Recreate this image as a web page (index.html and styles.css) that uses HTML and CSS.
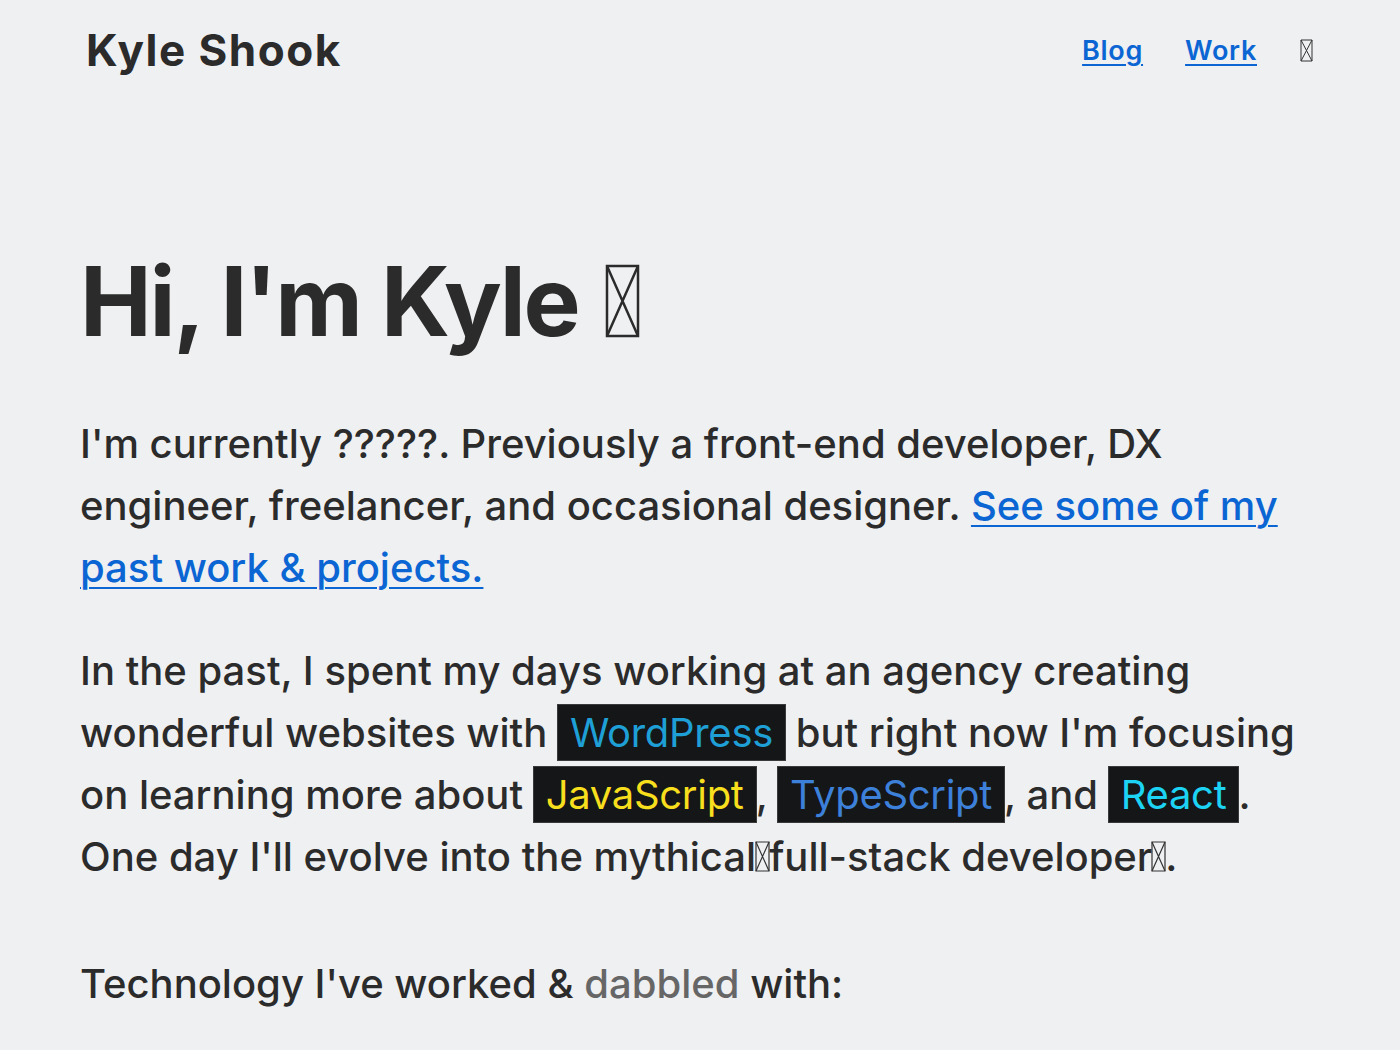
FILE: index.html
```html
<!DOCTYPE html>
<html lang="en">
<head>
<meta charset="utf-8">
<title>Kyle Shook</title>
<link rel="stylesheet" href="styles.css">
</head>
<body>
<div class="wrap">
  <header class="site-header">
    <a class="logo" href="#">Kyle Shook</a>
    <nav class="nav">
      <a href="#">Blog</a>
      <a href="#">Work</a>
      <span class="tofu tofu-nav"><svg viewBox="0 0 10 20" preserveAspectRatio="none"><rect x="0" y="0" width="10" height="20" fill="none" stroke="currentColor" vector-effect="non-scaling-stroke"/><path d="M0 0L10 20M10 0L0 20" stroke="currentColor" fill="none" vector-effect="non-scaling-stroke"/></svg></span>
    </nav>
  </header>

  <main>
    <h1 class="hero">Hi, I'm Kyle <span class="tofu tofu-hero"><svg viewBox="0 0 10 20" preserveAspectRatio="none"><rect x="0" y="0" width="10" height="20" fill="none" stroke="currentColor" vector-effect="non-scaling-stroke"/><path d="M0 0L10 20M10 0L0 20" stroke="currentColor" fill="none" vector-effect="non-scaling-stroke"/></svg></span></h1>

    <p class="lead">I'm currently ?????. Previously a front-end developer, DX engineer, freelancer, and occasional designer. <a href="#">See some of my past work &amp; projects.</a></p>

    <p class="lead">In the past, I spent my days working at an agency creating wonderful websites with <span class="tag tag-wp">WordPress</span> but right now I'm focusing on learning more about <span class="tag tag-js">JavaScript</span>, <span class="tag tag-ts">TypeScript</span>, and <span class="tag tag-react">React</span>. One day I'll evolve into the mythical<span class="tofu tofu-text"><svg viewBox="0 0 10 20" preserveAspectRatio="none"><rect x="0" y="0" width="10" height="20" fill="none" stroke="currentColor" vector-effect="non-scaling-stroke"/><path d="M0 0L10 20M10 0L0 20" stroke="currentColor" fill="none" vector-effect="non-scaling-stroke"/></svg></span>full-stack developer<span class="tofu tofu-text"><svg viewBox="0 0 10 20" preserveAspectRatio="none"><rect x="0" y="0" width="10" height="20" fill="none" stroke="currentColor" vector-effect="non-scaling-stroke"/><path d="M0 0L10 20M10 0L0 20" stroke="currentColor" fill="none" vector-effect="non-scaling-stroke"/></svg></span>.</p>

    <h2 class="section-title">Technology I've worked &amp; <span class="muted">dabbled</span> with:</h2>
  </main>
</div>
</body>
</html>
```

FILE: styles.css
```css
html, body {
  margin: 0;
  padding: 0;
}

body {
  background: #eff0f2;
  color: #2b2b2b;
  font-family: "Inter", "Lato", "Liberation Sans", sans-serif;
}

.wrap {
  max-width: 1240px;
  margin: 0 auto;
}

.site-header {
  display: flex;
  justify-content: space-between;
  align-items: center;
  padding-top: 18px;
}

.logo {
  font-size: 44px;
  line-height: 64px;
  font-weight: 700;
  letter-spacing: 1.5px;
  color: #2b2b2b;
  text-decoration: none;
  padding-left: 6px;
}

.nav {
  display: flex;
  align-items: center;
  gap: 42px;
  padding-right: 8px;
  margin-top: 0;
}

.nav a {
  font-size: 27px;
  font-weight: 600;
  letter-spacing: 0.7px;
  color: #0b66d4;
  text-decoration: underline;
  text-decoration-thickness: 2px;
  text-underline-offset: 4px;
}

.tofu {
  display: inline-block;
  color: #333;
}

.tofu svg {
  display: block;
  width: 100%;
  height: 100%;
  overflow: visible;
}

.tofu-nav {
  width: 11px;
  height: 21px;
  margin-left: 2px;
}

.tofu-nav svg {
  stroke-width: 1px;
}

.tofu-hero {
  width: 31px;
  height: 70px;
  vertical-align: baseline;
  color: #2b2b2b;
  margin-left: 8px;
}

.tofu-hero svg {
  stroke-width: 2.5px;
}

.tofu-text {
  width: 13px;
  height: 29px;
  vertical-align: baseline;
}

.tofu-text svg {
  stroke-width: 1.2px;
}

.hero {
  font-size: 96px;
  line-height: 1.2;
  font-weight: 700;
  margin: 162px 0 54px;
  letter-spacing: -2.3px;
}

.lead {
  font-size: 40px;
  line-height: 62px;
  font-weight: 500;
  margin: 0 0 41px;
}

.lead a {
  color: #0b66d4;
  text-decoration: underline;
  text-decoration-thickness: 2px;
  text-underline-offset: 5px;
}

.tag {
  background: #151617;
  padding: 3px 12px;
  font-weight: 400;
  letter-spacing: -0.3px;
  box-shadow: 0 0 0 1px #3a3a3a;
}

.tag-wp { color: #1e9fd6; }
.tag-js { color: #f7df1e; }
.tag-ts { color: #3d80d9; }
.tag-react { color: #1dd3f3; }

.section-title {
  font-size: 40px;
  line-height: 62px;
  font-weight: 500;
  margin: 65px 0 0;
}

.muted {
  color: #666;
}
```
